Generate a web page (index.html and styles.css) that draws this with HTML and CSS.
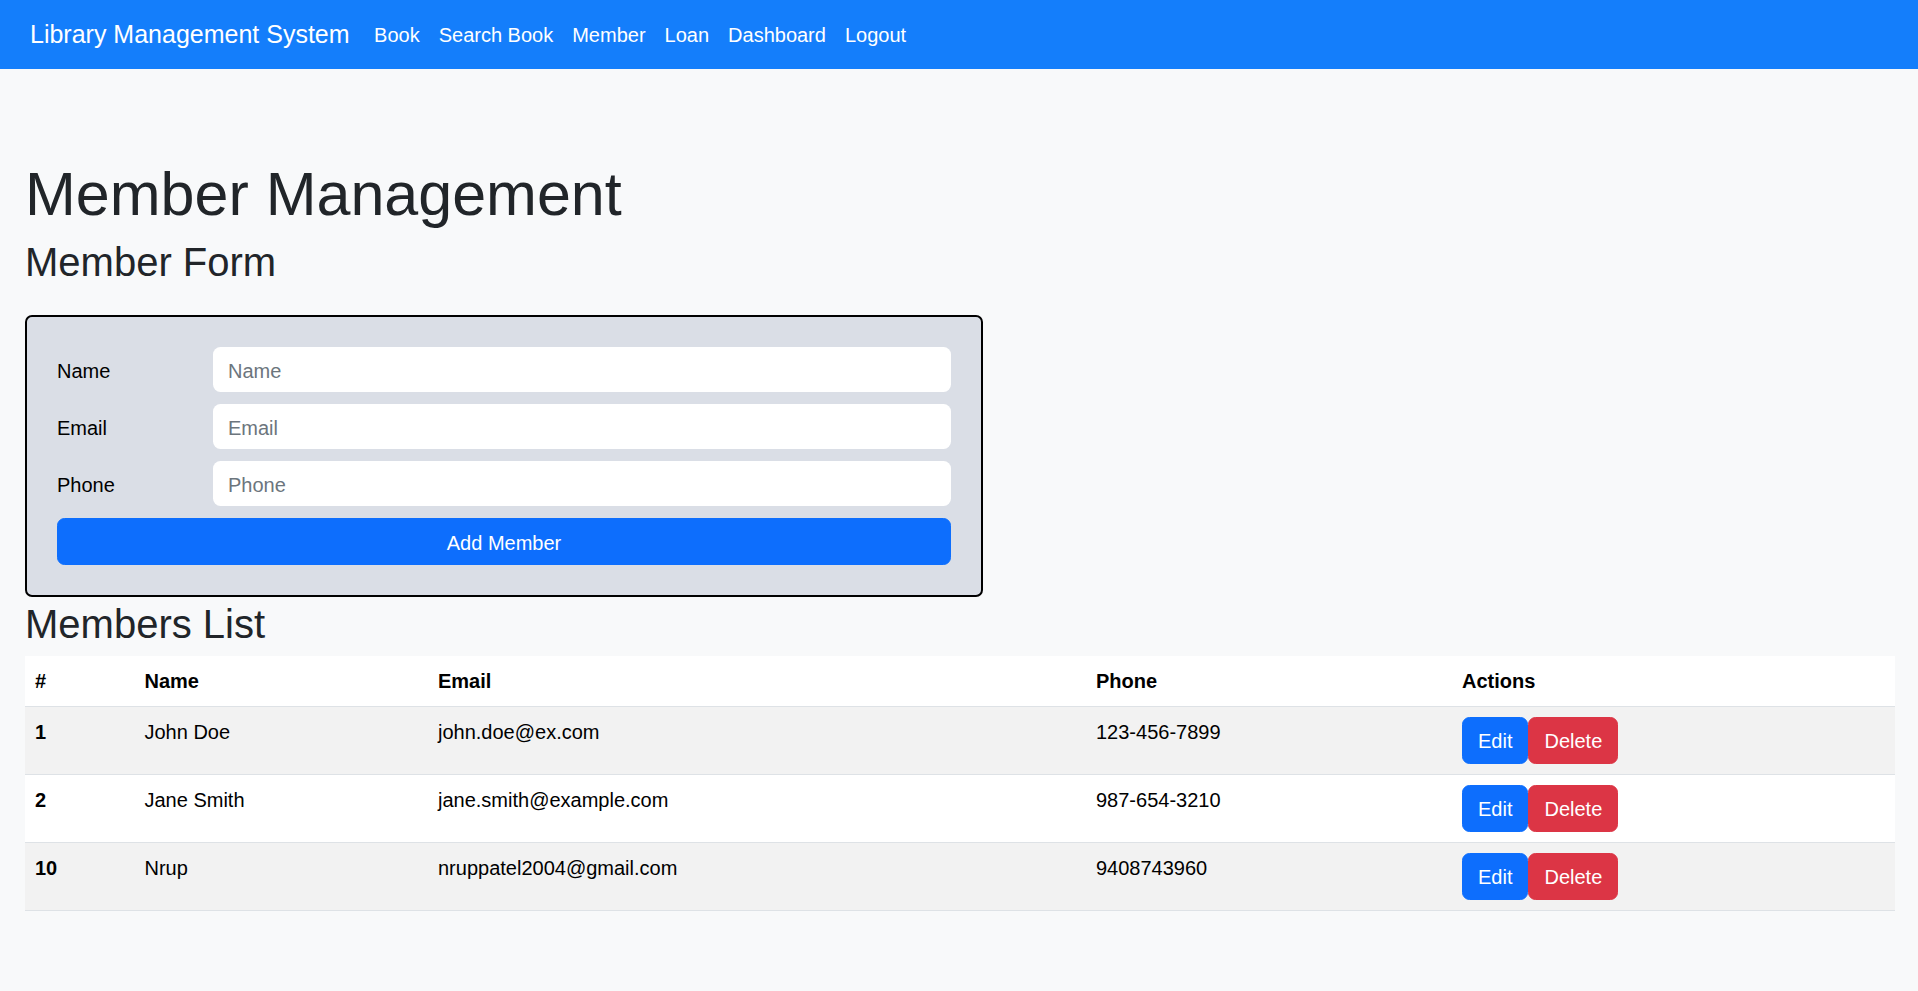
FILE: index.html
```html
<!DOCTYPE html>
<html lang="en">
<head>
<meta charset="utf-8">
<title>Member Management</title>
<link rel="stylesheet" href="styles.css">
</head>
<body>
<nav class="navbar">
  <a class="brand" href="#">Library Management System</a>
  <ul class="nav-links">
    <li><a href="#">Book</a></li>
    <li><a href="#">Search Book</a></li>
    <li><a href="#">Member</a></li>
    <li><a href="#">Loan</a></li>
    <li><a href="#">Dashboard</a></li>
    <li><a href="#">Logout</a></li>
  </ul>
</nav>
<main class="page">
  <h1 class="title">Member Management</h1>
  <h2 class="section-title">Member Form</h2>
  <form class="member-form">
    <div class="form-row">
      <label class="form-label">Name</label>
      <input class="form-input" type="text" placeholder="Name">
    </div>
    <div class="form-row">
      <label class="form-label">Email</label>
      <input class="form-input" type="text" placeholder="Email">
    </div>
    <div class="form-row">
      <label class="form-label">Phone</label>
      <input class="form-input" type="text" placeholder="Phone">
    </div>
    <button class="btn btn-primary btn-block" type="button">Add Member</button>
  </form>
  <h2 class="section-title list-title">Members List</h2>
  <table class="members-table">
    <thead>
      <tr>
        <th class="col-id">#</th>
        <th class="col-name">Name</th>
        <th class="col-email">Email</th>
        <th class="col-phone">Phone</th>
        <th class="col-actions">Actions</th>
      </tr>
    </thead>
    <tbody>
      <tr class="striped">
        <th>1</th>
        <td>John Doe</td>
        <td>john.doe@ex.com</td>
        <td>123-456-7899</td>
        <td><button class="btn btn-primary" type="button">Edit</button><button class="btn btn-danger" type="button">Delete</button></td>
      </tr>
      <tr>
        <th>2</th>
        <td>Jane Smith</td>
        <td>jane.smith@example.com</td>
        <td>987-654-3210</td>
        <td><button class="btn btn-primary" type="button">Edit</button><button class="btn btn-danger" type="button">Delete</button></td>
      </tr>
      <tr class="striped">
        <th>10</th>
        <td>Nrup</td>
        <td>nruppatel2004@gmail.com</td>
        <td>9408743960</td>
        <td><button class="btn btn-primary" type="button">Edit</button><button class="btn btn-danger" type="button">Delete</button></td>
      </tr>
    </tbody>
  </table>
</main>
</body>
</html>
```

FILE: styles.css
```css
* { box-sizing: border-box; }

html, body {
  margin: 0;
  padding: 0;
}

body {
  background: #f8f9fa;
  color: #212529;
  font-family: "Segoe UI", "Liberation Sans", Arial, sans-serif;
  font-size: 20px;
  line-height: 1.5;
}

.navbar {
  display: flex;
  align-items: center;
  height: 69px;
  padding: 0 30px;
  background: #147efb;
}

.brand {
  color: #fff;
  text-decoration: none;
  font-size: 25px;
  line-height: 37px;
  margin-right: 15px;
}

.nav-links {
  display: flex;
  list-style: none;
  margin: 0;
  padding: 0;
}

.nav-links a {
  display: block;
  color: #fff;
  text-decoration: none;
  padding: 8px 9.5px;
  font-size: 20px;
  line-height: 30px;
}

.page {
  padding: 89px 23px 40px 25px;
}

.title {
  margin: 0 0 7px;
  font-size: 61px;
  font-weight: 400;
  line-height: 73px;
}

.section-title {
  margin: 0 0 10px;
  font-size: 40px;
  font-weight: 400;
  line-height: 48px;
}

.member-form {
  width: 958px;
  margin: 29px 0 0;
  padding: 30px;
  border: 2px solid #000;
  border-radius: 7px;
  background: #dadee6;
  display: flex;
  flex-direction: column;
  gap: 12px;
}

.form-row {
  display: flex;
  align-items: center;
}

.form-label {
  width: 156px;
  flex: none;
  color: #000;
  padding-top: 2px;
}

.form-input {
  flex: 1;
  height: 45px;
  padding: 3px 15px 0;
  border: none;
  border-radius: 7.5px;
  background: #fff;
  font: inherit;
  color: #212529;
}

.form-input::placeholder {
  color: #6c757d;
}

.btn {
  display: inline-block;
  font: inherit;
  font-size: 20px;
  line-height: 30px;
  padding: 7.5px 15px;
  border: 1.25px solid transparent;
  border-radius: 7.5px;
  color: #fff;
  cursor: pointer;
  vertical-align: top;
}

.btn-primary {
  background: #0d6efd;
  border-color: #0d6efd;
}

.btn-danger {
  background: #dc3545;
  border-color: #dc3545;
}

.btn-block {
  width: 100%;
  height: 47px;
  padding: 2px 0 0;
}

.list-title {
  margin-top: 3px;
  margin-bottom: 8px;
}

.members-table {
  width: 100%;
  border-collapse: collapse;
  background: #fff;
  color: #000;
}

.members-table th,
.members-table td {
  padding: 10px;
  text-align: left;
  vertical-align: top;
  border-bottom: 1px solid #dee2e6;
  font-size: 20px;
  line-height: 30px;
}

.members-table th {
  font-weight: 700;
}

.members-table tr.striped th,
.members-table tr.striped td {
  background: #f2f2f2;
}

.col-id { width: 109.5px; }
.col-name { width: 293.5px; }
.col-email { width: 658px; }
.col-phone { width: 366px; }
.col-actions { width: 443px; }
```
